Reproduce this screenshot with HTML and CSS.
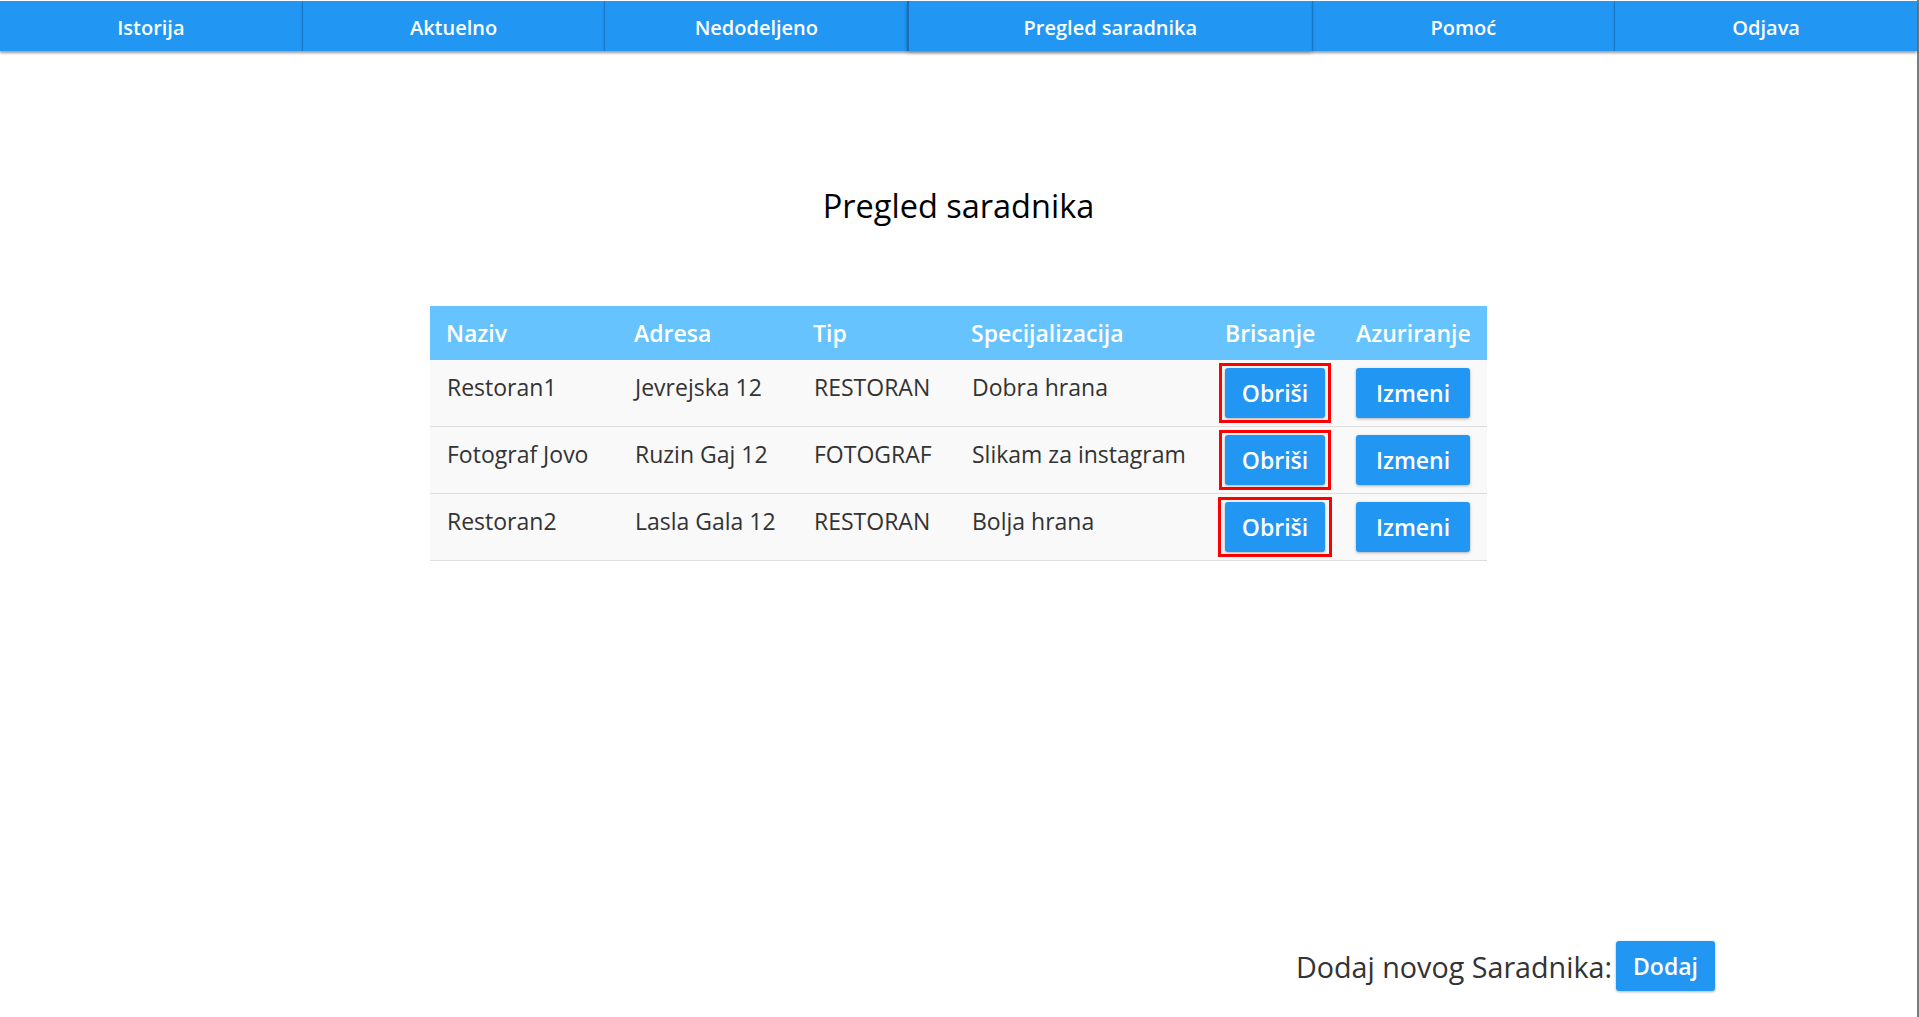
FILE: index.html
```html
<!DOCTYPE html>
<html lang="sr">
<head>
<meta charset="utf-8">
<title>Pregled saradnika</title>
<link rel="stylesheet" href="styles.css">
</head>
<body>
<div class="page">
  <nav class="nav">
    <a class="nav-item">Istorija</a>
    <a class="nav-item">Aktuelno</a>
    <a class="nav-item">Nedodeljeno</a>
    <a class="nav-item nav-item-active">Pregled saradnika</a>
    <a class="nav-item">Pomoć</a>
    <a class="nav-item">Odjava</a>
  </nav>

  <h1 class="title">Pregled saradnika</h1>

  <table class="grid">
    <colgroup>
      <col class="col-naziv">
      <col class="col-adresa">
      <col class="col-tip">
      <col class="col-spec">
      <col class="col-bris">
      <col class="col-azur">
    </colgroup>
    <thead>
      <tr>
        <th>Naziv</th>
        <th>Adresa</th>
        <th>Tip</th>
        <th>Specijalizacija</th>
        <th>Brisanje</th>
        <th>Azuriranje</th>
      </tr>
    </thead>
    <tbody>
      <tr>
        <td class="txt">Restoran1</td>
        <td class="txt">Jevrejska 12</td>
        <td class="txt">RESTORAN</td>
        <td class="txt">Dobra hrana</td>
        <td class="btn-cell"><span class="mark"><button class="btn btn-del">Obriši</button></span></td>
        <td class="btn-cell"><button class="btn btn-edit">Izmeni</button></td>
      </tr>
      <tr>
        <td class="txt">Fotograf Jovo</td>
        <td class="txt">Ruzin Gaj 12</td>
        <td class="txt">FOTOGRAF</td>
        <td class="txt">Slikam za instagram</td>
        <td class="btn-cell"><span class="mark"><button class="btn btn-del">Obriši</button></span></td>
        <td class="btn-cell"><button class="btn btn-edit">Izmeni</button></td>
      </tr>
      <tr>
        <td class="txt">Restoran2</td>
        <td class="txt">Lasla Gala 12</td>
        <td class="txt">RESTORAN</td>
        <td class="txt">Bolja hrana</td>
        <td class="btn-cell"><span class="mark mark-wide"><button class="btn btn-del">Obriši</button></span></td>
        <td class="btn-cell"><button class="btn btn-edit">Izmeni</button></td>
      </tr>
    </tbody>
  </table>

  <div class="add-row">
    <span class="add-label">Dodaj novog Saradnika:</span>
    <button class="btn btn-add">Dodaj</button>
  </div>
</div>
</body>
</html>
```

FILE: styles.css
```css
* { box-sizing: border-box; }

html, body {
  margin: 0;
  padding: 0;
  background: #ffffff;
}

body {
  font-family: "Open Sans", "Noto Sans", "Liberation Sans", sans-serif;
  color: #333333;
}

.page {
  width: 1919px;
  height: 1017px;
  border-right: 2px solid #7c7c7c;
  display: flex;
  flex-direction: column;
  padding-top: 1px;
  padding-bottom: 26px;
}

/* ---------- navigation ---------- */
.nav {
  display: flex;
  height: 50px;
  background: #2196f3;
  box-shadow: 0 2px 3px rgba(0, 0, 0, 0.25);
}

.nav-item {
  flex: 3 1 0;
  display: flex;
  align-items: center;
  justify-content: center;
  padding-top: 3px;
  color: #ffffff;
  font-size: 20px;
  font-weight: 600;
  border-left: 1px solid #1b78c8;
  box-shadow: 0 2px 2px rgba(0, 0, 0, 0.18);
  cursor: pointer;
}

.nav-item:first-child { border-left: none; }

.nav-item-active {
  flex-grow: 4;
  border-left: 2px solid #1a6fb8;
  box-shadow: 0 2px 3px rgba(0, 0, 0, 0.35);
}

/* ---------- title ---------- */
.title {
  margin: 133px 0 0;
  text-align: center;
  font-size: 32.5px;
  font-weight: 400;
  color: #000000;
  line-height: 44px;
}

/* ---------- table ---------- */
.grid {
  margin: 78px auto 0;
  width: 1057px;
  table-layout: fixed;
  border-collapse: collapse;
  font-size: 23px;
}

.col-naziv { width: 188px; }
.col-adresa { width: 179px; }
.col-tip { width: 158px; }
.col-spec { width: 254px; }
.col-bris { width: 131px; }
.col-azur { width: 147px; }

.grid th {
  height: 54px;
  padding: 0 0 0 16px;
  background: #66c3fd;
  color: #ffffff;
  font-weight: 600;
  text-align: left;
  white-space: nowrap;
}

.grid td {
  background: #f9f9f9;
  border-bottom: 1px solid #dddddd;
  vertical-align: top;
  padding: 12px 0 4px 17px;
  line-height: 31px;
  color: #333333;
  white-space: nowrap;
}

.grid td.btn-cell {
  padding: 8px 0 8px 16px;
}

/* ---------- buttons ---------- */
.btn {
  display: block;
  height: 50px;
  padding: 0;
  border: none;
  border-radius: 3px;
  background: #2196f3;
  color: #ffffff;
  font-family: "Open Sans", "Noto Sans", "Liberation Sans", sans-serif;
  font-size: 23px;
  font-weight: 600;
  box-shadow: 0 1px 3px rgba(0, 0, 0, 0.3);
  cursor: pointer;
}

.btn-del { width: 100px; }
.btn-edit { width: 114px; }

.mark {
  display: block;
  width: fit-content;
  margin: -5px 0 -5px -6px;
  padding: 2px 3px;
  border: 3px solid #ff0000;
}

.mark-wide {
  margin-left: -7px;
  padding: 2px 4px;
}

/* ---------- add row ---------- */
.add-row {
  margin-top: auto;
  display: flex;
  align-items: center;
  justify-content: flex-end;
  padding-right: 202px;
  height: 50px;
}

.add-label {
  font-size: 28.7px;
  color: #333333;
  margin-right: 4px;
}

.btn-add {
  width: 99px;
}
```
